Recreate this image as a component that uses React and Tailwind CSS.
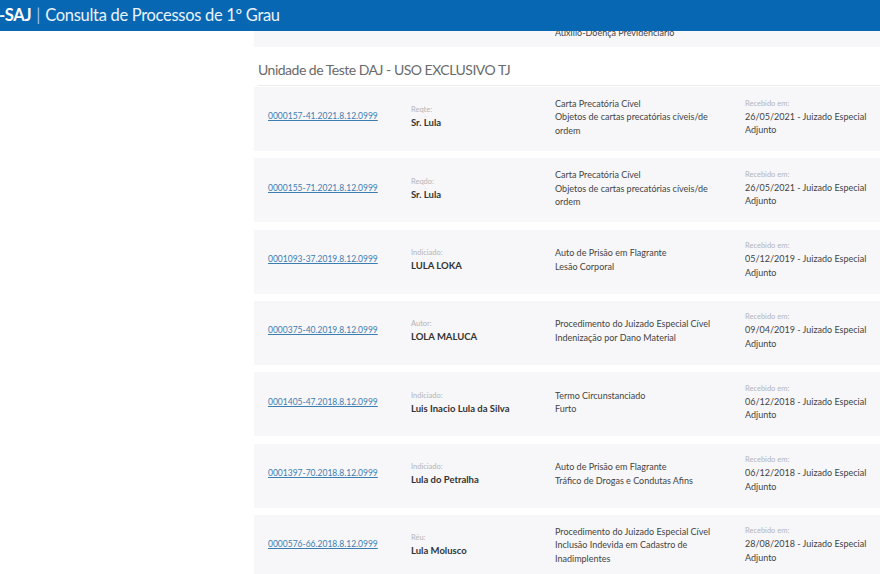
const rows = [
  {
    numero: "0000157-41.2021.8.12.0999",
    papel: "Reqte:",
    parte: "Sr. Lula",
    classe: "Carta Precatória Cível",
    assunto: "Objetos de cartas precatórias cíveis/de ordem",
    recebido: "26/05/2021 - Juizado Especial Adjunto",
  },
  {
    numero: "0000155-71.2021.8.12.0999",
    papel: "Reqdo:",
    parte: "Sr. Lula",
    classe: "Carta Precatória Cível",
    assunto: "Objetos de cartas precatórias cíveis/de ordem",
    recebido: "26/05/2021 - Juizado Especial Adjunto",
  },
  {
    numero: "0001093-37.2019.8.12.0999",
    papel: "Indiciado:",
    parte: "LULA LOKA",
    classe: "Auto de Prisão em Flagrante",
    assunto: "Lesão Corporal",
    recebido: "05/12/2019 - Juizado Especial Adjunto",
  },
  {
    numero: "0000375-40.2019.8.12.0999",
    papel: "Autor:",
    parte: "LOLA MALUCA",
    classe: "Procedimento do Juizado Especial Cível",
    assunto: "Indenização por Dano Material",
    recebido: "09/04/2019 - Juizado Especial Adjunto",
  },
  {
    numero: "0001405-47.2018.8.12.0999",
    papel: "Indiciado:",
    parte: "Luis Inacio Lula da Silva",
    classe: "Termo Circunstanciado",
    assunto: "Furto",
    recebido: "06/12/2018 - Juizado Especial Adjunto",
  },
  {
    numero: "0001397-70.2018.8.12.0999",
    papel: "Indiciado:",
    parte: "Lula do Petralha",
    classe: "Auto de Prisão em Flagrante",
    assunto: "Tráfico de Drogas e Condutas Afins",
    recebido: "06/12/2018 - Juizado Especial Adjunto",
  },
  {
    numero: "0000576-66.2018.8.12.0999",
    papel: "Réu:",
    parte: "Lula Molusco",
    classe: "Procedimento do Juizado Especial Cível",
    assunto: "Inclusão Indevida em Cadastro de Inadimplentes",
    recebido: "28/08/2018 - Juizado Especial Adjunto",
  },
];

const ProcessoRow = ({ item }) => (
  <div className="mb-[7.33px] grid h-[64px] grid-cols-[143px_144px_190px_140px] items-center bg-[#f7f7f9] pb-[4px] pl-[14px] text-[9px] leading-[13.5px]">
    <a href="#" className="text-[8.5px] text-[#3c7db2] underline decoration-[#3c7db2]">
      {item.numero}
    </a>
    <div>
      <div className="text-[7.5px] leading-[12px] text-[#b5b5b5]">{item.papel}</div>
      <div className="text-[9.5px] font-bold text-[#333]">{item.parte}</div>
    </div>
    <div className="w-[160px] text-[#444]">
      <div>{item.classe}</div>
      <div>{item.assunto}</div>
    </div>
    <div className="w-[128px]">
      <div className="text-[7.5px] leading-[12px] text-[#b5b5b5]">Recebido em:</div>
      <div className="text-[#444]">{item.recebido}</div>
    </div>
  </div>
);

export default function App() {
  return (
    <div
      className="h-[574px] w-[880px] overflow-hidden bg-white"
      style={{ fontFamily: 'Lato, "Noto Sans", sans-serif' }}
    >
      <header className="relative z-10 flex h-[31px] items-center bg-[#0867b3] text-[16.5px] tracking-[-0.3px] text-white">
        <span className="ml-[-1px] font-bold">-SAJ</span>
        <span className="mx-[5px] text-[#9cc6ea]">|</span>
        <span className="text-[#eaf3fb]">Consulta de Processos de 1º Grau</span>
      </header>

      <div className="flex">
        <aside className="w-[254px] shrink-0" />
        <main className="flex-1">
          {/* tail of the previous group */}
          <div className="mt-[-48px] grid h-[64px] grid-cols-[143px_144px_190px_140px] items-end bg-[#f7f7f9] pb-[8px] pl-[14px] text-[9px] leading-[13.5px] text-[#444]">
            <div />
            <div />
            <div>Auxílio-Doença Previdenciário</div>
            <div />
          </div>
          <div className="ml-[4px] mt-[3px] border-b border-[#ebebeb] pb-[5px] pt-[10px] text-[14px] leading-[20px] tracking-[-0.5px] text-[#6a6a6a]">
            Unidade de Teste DAJ - USO EXCLUSIVO TJ
          </div>
          <div className="pt-[1px]">
            {rows.map((item) => (
              <ProcessoRow key={item.numero} item={item} />
            ))}
          </div>
        </main>
      </div>
    </div>
  );
}
